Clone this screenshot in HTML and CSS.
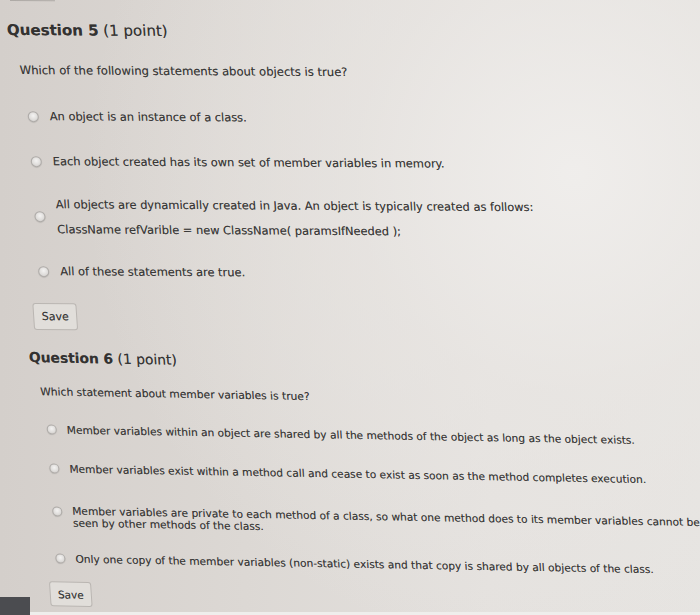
FILE: index.html
```html
<!DOCTYPE html>
<html>
<head>
<meta charset="utf-8">
<title>Quiz</title>
<link rel="stylesheet" href="styles.css">
</head>
<body>
<div class="screen">
  <div class="page">
    <div class="edge"></div>
    <section class="q q5">
      <h2 class="title"><strong>Question 5</strong> (1 point)</h2>
      <p class="prompt">Which of the following statements about objects is true?</p>
      <div class="opts">
        <div class="opt o1"><span class="radio"></span><span class="txt">An object is an instance of a class.</span></div>
        <div class="opt o2"><span class="radio"></span><span class="txt">Each object created has its own set of member variables in memory.</span></div>
        <div class="opt o3"><span class="radio"></span>
          <div class="txt multi">
            <p class="line">All objects are dynamically created in Java. An object is typically created as follows:</p>
            <p class="line second">ClassName refVarible = new ClassName( paramsIfNeeded );</p>
          </div>
        </div>
        <div class="opt o4"><span class="radio"></span><span class="txt">All of these statements are true.</span></div>
      </div>
      <button class="save">Save</button>
    </section>
    <section class="q q6">
      <h2 class="title"><strong>Question 6</strong> (1 point)</h2>
      <p class="prompt">Which statement about member variables is true?</p>
      <div class="opts">
        <div class="opt o1"><span class="radio"></span><span class="txt">Member variables within an object are shared by all the methods of the object as long as the object exists.</span></div>
        <div class="opt o2"><span class="radio"></span><span class="txt">Member variables exist within a method call and cease to exist as soon as the method completes execution.</span></div>
        <div class="opt o3 top"><span class="radio"></span><span class="txt wrap">Member variables are private to each method of a class, so what one method does to its member variables cannot be<br>seen by other methods of the class.</span></div>
        <div class="opt o4"><span class="radio"></span><span class="txt">Only one copy of the member variables (non-static) exists and that copy is shared by all objects of the class.</span></div>
      </div>
      <button class="save">Save</button>
    </section>
  </div>
  <div class="taskbar"></div>
  <div class="strip"></div>
</div>
</body>
</html>
```
FILE: styles.css
```css
* { box-sizing: border-box; }
html, body { margin: 0; padding: 0; }
body {
  font-family: "DejaVu Sans", Verdana, sans-serif;
  color: #393837;
}
.screen {
  position: relative;
  width: 700px;
  height: 615px;
  overflow: hidden;
  background:
    radial-gradient(ellipse 70% 80% at 82% 28%, rgba(240,238,236,0.95) 0%, rgba(234,231,228,0.6) 45%, rgba(234,231,228,0) 100%),
    linear-gradient(to right, #d4cfcb 0%, #dcd8d4 35%, #e4e1de 70%, #e6e4e1 100%);
}
.page {
  width: 760px;
  transform: matrix(1, 0.006, 0.067, 1, 0, 0);
  transform-origin: 0 0;
  text-shadow: 0 0 0.6px rgba(40,40,40,0.45);
}
.edge {
  height: 1px;
  width: 45px;
  margin-left: 10px;
  background: #aeaaa6;
}
.title {
  margin: 0;
  font-size: 15px;
  font-weight: normal;
  line-height: 20px;
  white-space: nowrap;
  color: #333231;
}
.title strong { font-weight: bold; }
.prompt {
  margin: 0;
  white-space: nowrap;
}
.opts { display: flex; flex-direction: column; }
.opt {
  display: flex;
  align-items: center;
  white-space: nowrap;
}
.opt.top { align-items: flex-start; }
.radio {
  flex: none;
  border-radius: 50%;
  border: 1px solid #aeaba8;
  background: radial-gradient(circle at 50% 40%, #f4f3f2 0%, #e0dedc 55%, #c9c6c3 100%);
  box-shadow: 0 0.5px 1px rgba(0,0,0,0.15);
}
.txt { display: block; }
.line { margin: 0; }
.save {
  display: block;
  font-family: "DejaVu Sans", Verdana, sans-serif;
  color: #393837;
  text-shadow: inherit;
  border: 1px solid #bab6b2;
  border-radius: 3px;
  background: #e1deda;
  padding: 0;
}

/* Question 5 */
.q5 .title { margin: 19px 0 0 5px; }
.q5 .prompt { margin: 22px 0 0 15px; font-size: 11.6px; line-height: 16px; }
.q5 .opt { margin-left: 20px; font-size: 11.4px; line-height: 16px; }
.q5 .radio { width: 11px; height: 11px; margin-right: 11px; }
.q5 .o1 { margin-top: 30px; }
.q5 .o2 { margin-top: 29px; }
.q5 .o3 { margin-top: 27px; }
.q5 .o3 .second { margin-top: 9px; }
.q5 .o4 { margin-top: 26px; }
.q5 .save { margin: 24px 0 0 12px; width: 44px; height: 27px; font-size: 11px; }

/* Question 6 */
.q6 {
  transform: skewY(0.69deg);
  transform-origin: 0 0;
}
.q6 .title { margin: 18px 0 0 5px; font-size: 13.8px; line-height: 18px; }
.q6 .prompt { margin: 19px 0 0 14px; font-size: 10.7px; line-height: 14px; }
.q6 .opt { margin-left: 18px; font-size: 10.6px; line-height: 14px; }
.q6 .radio { width: 10px; height: 10px; margin-right: 10px; }
.q6 .o1 { margin-top: 23px; }
.q6 .o2 { margin-top: 25px; }
.q6 .o3 { margin-top: 29px; line-height: 12px; }
.q6 .o3 .radio { margin-top: 2px; }
.q6 .o4 { margin-top: 23px; }
.q6 .save { margin: 16px 0 0 10px; width: 42px; height: 25px; font-size: 10.5px; }

/* bits of other windows overlapping the photo edge */
.taskbar {
  position: absolute;
  left: 0;
  bottom: 0;
  width: 30px;
  height: 18px;
  background: #4b4c50;
}
.strip {
  position: absolute;
  left: 30px;
  right: 0;
  bottom: 0;
  height: 3px;
  background: #efeeec;
}
```
